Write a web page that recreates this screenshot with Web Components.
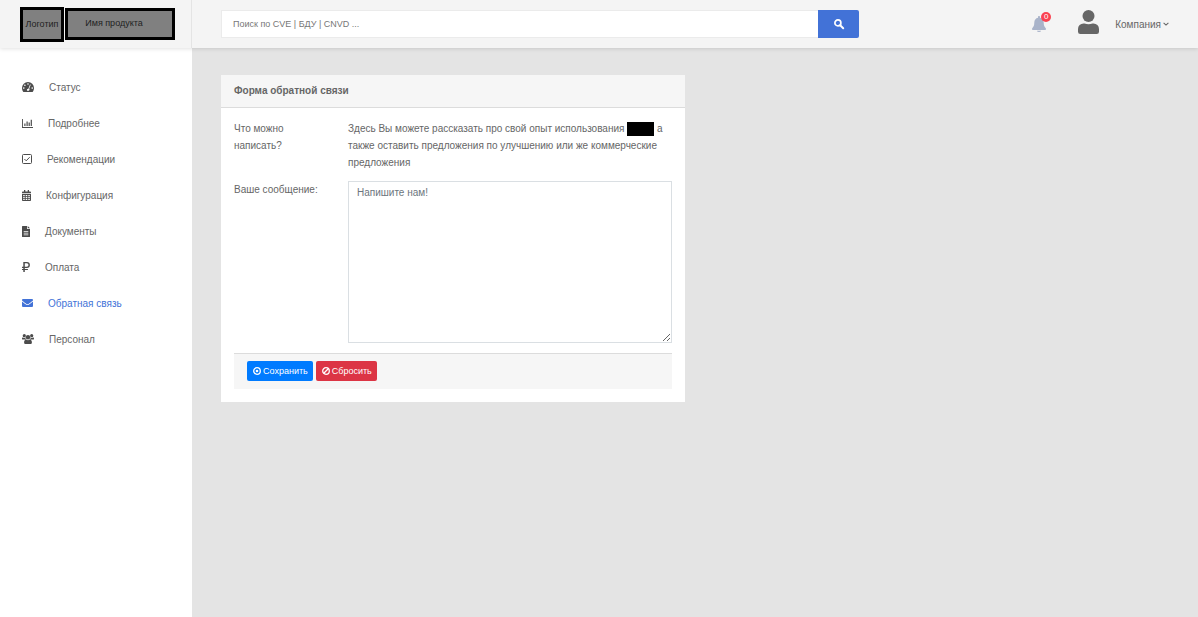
<!DOCTYPE html>
<html lang="ru">
<head>
<meta charset="utf-8">
<meta name="viewport" content="width=device-width, initial-scale=1">
<title>Форма обратной связи</title>
<style>
  html, body { margin: 0; height: 100%; }
  body {
    --blue: #4272d7;
    --text: #666;
    --line: #dcdcdc;
    --soft: #f6f6f6;
    background: #e4e4e4;
    color: var(--text);
    font: 10px/17px "Liberation Sans", Arial, sans-serif;
  }
</style>
</head>
<body>
<app-shell>
  <brand-logo slot="brand"><span>Логотип</span><span slot="name">Имя продукта</span></brand-logo>
  <search-box slot="tools"></search-box>
  <user-tools slot="tools" count="0">Компания</user-tools>
  <side-nav slot="nav">
    <nav-item icon="gauge">Статус</nav-item>
    <nav-item icon="chart">Подробнее</nav-item>
    <nav-item icon="check">Рекомендации</nav-item>
    <nav-item icon="calendar">Конфигурация</nav-item>
    <nav-item icon="file">Документы</nav-item>
    <nav-item icon="ruble">Оплата</nav-item>
    <nav-item icon="mail" active>Обратная связь</nav-item>
    <nav-item icon="users">Персонал</nav-item>
  </side-nav>
  <feedback-form></feedback-form>
</app-shell>

<script>
const ICONS = {
  gauge: [12, 10, '<path fill-rule="evenodd" d="M6 0a6 6 0 0 0-6 6c0 1.400.5 2.700 1.200 3.700.1.200.3.300.5.300h8.600c.2 0 .4-.1.500-.3.700-1 1.200-2.300 1.200-3.700a6 6 0 0 0-6-6zM6 1.200a.8.800 0 1 1 0 1.600.8.800 0 0 1 0-1.600zM2.900 2.400a.8.800 0 1 1 0 1.600.8.800 0 0 1 0-1.600zM1.800 5.300a.8.800 0 1 1 0 1.600.8.800 0 0 1 0-1.600zM10.200 5.300a.8.800 0 1 1 0 1.600.8.800 0 0 1 0-1.600zM8 2.500l.7.300-1.500 4a1.300 1.300 0 0 1-.3 1.900H5.100a1.300 1.300 0 0 1 1.300-2z"/>'],
  chart: [11, 9, '<path d="M0 0h.9v8H11v.9H0zM2.300 4.500h1.200V7H2.300zM4.500 2.500h1.200V7H4.500zM6.600 3.500h1.200V7H6.600zM8.700.8h1.200V7H8.700z"/>'],
  check: [10, 10, '<path fill="none" stroke="currentColor" d="M1.500.5h7a1 1 0 0 1 1 1v7a1 1 0 0 1-1 1h-7a1 1 0 0 1-1-1v-7a1 1 0 0 1 1-1z"/><path fill="none" stroke="currentColor" d="M2.400 5l1.800 1.800 3.500-3.600"/>'],
  calendar: [9, 11, '<path fill-rule="evenodd" d="M2 0h1.300v1.400h2.400V0H7v1.400h1.200c.5 0 .8.300.8.800v1.100H0V2.200c0-.5.300-.8.800-.8H2zM0 4h9v6.200c0 .5-.3.800-.8.800H.8c-.5 0-.8-.3-.8-.8zm1.200 1v1.300h1.500V5zm2.500 0v1.300h1.600V5zm2.600 0v1.300h1.500V5zM1.200 7v1.200h1.500V7zm2.500 0v1.200h1.600V7zm2.600 0v1.200h1.500V7zM1.200 9v1h1.500V9zm2.500 0v1h1.600V9zm2.600 0v1h1.500V9z"/>'],
  file: [8, 11, '<path fill-rule="evenodd" d="M.6 0H5v2.400c0 .4.200.6.600.6H8v7.400c0 .4-.2.600-.6.600H.6c-.4 0-.6-.2-.6-.6V.6C0 .2.200 0 .6 0zM1.700 5v.8h4.600V5zm0 1.700v.8h4.600v-.8zm0 1.700v.8h4.600v-.8zM5.700 0L8 2.300H5.700z"/>'],
  ruble: [8, 10, '<path fill-rule="evenodd" d="M1.300 0h3.600a2.900 2.900 0 0 1 0 6H2.800v.9h3.100v1.200H2.800V10H1.300V8.100H0V6.900h1.300V6H0V4.700h1.300zm1.500 1.300v3.400h2a1.700 1.700 0 0 0 0-3.400z"/>'],
  mail: [11, 8, '<path d="M1 0h9a1 1 0 0 1 1 1v.4C9.600 2.500 8.400 3.500 6.500 4.900c-.7.500-1.300.5-2 0C2.600 3.500 1.400 2.500 0 1.400V1a1 1 0 0 1 1-1zM0 2.500c1.300 1 2.300 1.800 4 3 1 .7 2 .7 3 0 1.700-1.200 2.700-2 4-3V7a1 1 0 0 1-1 1H1a1 1 0 0 1-1-1z"/>'],
  users: [12, 10, '<circle cx="2.300" cy="1.700" r="1.600"/><circle cx="9.700" cy="1.700" r="1.600"/><circle cx="6" cy="3.300" r="2.200"/><path d="M.9 3.600c.9.500 1.800.5 2.500 0 0 .9.200 1.500.6 2H1.300C.5 5.600 0 5.300 0 4.700c0-.6.300-1.200.9-1.100zM11.100 3.600c-.9.500-1.800.5-2.500 0 0 .9-.2 1.500-.6 2h2.700c.8 0 1.300-.3 1.300-.9s-.3-1.200-.9-1.100zM4.200 5.600c1.200.8 2.400.8 3.600 0C9.300 5.700 9.900 7 9.900 8.400c0 1-.7 1.600-1.600 1.600H3.700c-.9 0-1.600-.6-1.600-1.600 0-1.400.6-2.700 2.100-2.800z"/>'],
  search: [10, 10, '<circle cx="3.900" cy="3.900" r="3" fill="none" stroke="currentColor" stroke-width="1.700"/><path d="M6.200 6.200l3 3" stroke="currentColor" stroke-width="2" stroke-linecap="round"/>'],
  bell: [14, 16, '<path d="M7 0c.6 0 1 .4 1 1v.7c2.300.5 3.700 2.300 3.700 4.800 0 3.200.8 4.300 1.900 5.400.8.800.4 2.100-.8 2.100H1.200C0 14-.4 12.700.4 11.900c1.100-1.100 1.900-2.200 1.900-5.400C2.300 4 3.700 2.200 6 1.700V1c0-.6.400-1 1-1zM5 14.700h4a2 1.300 0 0 1-4 0z"/>'],
  user: [21, 24, '<circle cx="10.500" cy="6" r="6"/><path d="M5.500 13.500h1c2.600 1 5.400 1 8 0h1a5.500 5.500 0 0 1 5.500 5.500v2.700a2.300 2.300 0 0 1-2.300 2.300H2.300A2.300 2.300 0 0 1 0 21.700V19a5.500 5.500 0 0 1 5.500-5.500z"/>'],
  chevron: [6, 4, '<path d="M.6.800L3 3.100 5.400.8" fill="none" stroke="currentColor" stroke-width="1.100"/>'],
  target: [8, 8, '<circle cx="4" cy="4" r="3.300" fill="none" stroke="currentColor" stroke-width="1.300"/><circle cx="4" cy="4" r="1.300"/>'],
  ban: [8, 8, '<circle cx="4" cy="4" r="3.300" fill="none" stroke="currentColor" stroke-width="1.300"/><path d="M6.200 1.800L1.800 6.200" stroke="currentColor" stroke-width="1.300"/>']
};

/* Base class: fills an open shadow root from the subclass's render(). */
class Base extends HTMLElement {
  connectedCallback() {
    if (this.shadowRoot) return;
    const t = document.createElement('template');
    t.innerHTML = '<style>*{box-sizing:border-box}</style>' + this.render();
    this.attachShadow({ mode: 'open' }).append(t.content.cloneNode(true));
  }
}

class UiIcon extends Base {
  render() {
    const [w, h, body] = ICONS[this.getAttribute('name')];
    return `<style>:host{display:inline-flex;flex:none}svg{display:block;overflow:visible}</style>
      <svg width="${w}" height="${h}" viewBox="0 0 ${w} ${h}" fill="currentColor" aria-hidden="true">${body}</svg>`;
  }
}

class AppShell extends Base {
  render() {
    return `<style>
      :host{display:grid;grid-template:48px 1fr / 192px minmax(0,1fr);min-height:100vh}
      header{grid-column:1/-1;display:grid;grid-template-columns:subgrid;background:#f4f4f4;box-shadow:0 1px 4px rgba(0,0,0,.12);z-index:1}
      .brand{display:flex;align-items:center;padding-left:20px;border-right:1px solid #e4e4e4}
      .tools{display:flex;align-items:center;padding:0 29px}
      aside{background:#fff;padding-top:21px}
      main{display:grid;grid-template-columns:1fr 1fr;gap:20px;align-items:start;padding:27px 29px}
    </style>
    <header><div class="brand"><slot name="brand"></slot></div><div class="tools"><slot name="tools"></slot></div></header>
    <aside><slot name="nav"></slot></aside>
    <main><slot></slot></main>`;
  }
}

class BrandLogo extends Base {
  render() {
    return `<style>
      :host{display:flex;align-items:center;gap:1px;color:#222;font-size:9px;line-height:12px}
      div{display:flex;align-items:center;justify-content:center;background:#808080;border:3px solid #000}
      .mark{width:44px;height:35px}
      .name{width:110px;height:32px;padding:0 12px 2px 0}
    </style><div class="mark"><slot></slot></div><div class="name"><slot name="name"></slot></div>`;
  }
}

class SearchBox extends Base {
  render() {
    return `<style>
      :host{display:block;flex:1}
      form{display:flex;height:28px}
      input{flex:1;min-width:0;margin:0;padding:0 11px;border:1px solid #ebebeb;border-right:0;background:#fff;color:var(--text);font:9px/12px "Liberation Sans",Arial,sans-serif;outline:0}
      input::placeholder{color:#777;opacity:1}
      button{display:flex;align-items:center;justify-content:center;width:41px;padding:0;border:0;border-radius:0 2px 2px 0;background:var(--blue);color:#fff}
    </style>
    <form role="search"><input type="search" aria-label="Поиск" placeholder="Поиск по CVE | БДУ | CNVD ..."><button type="button" aria-label="Найти"><ui-icon name="search"></ui-icon></button></form>`;
  }
}

class UserTools extends Base {
  render() {
    return `<style>
      :host{display:flex;align-items:center;margin-left:173px}
      button{display:flex;align-items:center;padding:0;border:0;background:none;color:var(--text);font:inherit}
      .bell{position:relative;color:#a9b3c9}
      .badge{position:absolute;left:9px;top:-4px;width:10px;height:10px;border-radius:50%;background:#fa4251;color:#fff;font-size:8px;line-height:10px;text-align:center}
      .user{margin-left:32px}
      .user ui-icon:first-child{margin-right:16px;margin-bottom:4px}
      .user ui-icon:last-child{margin-left:2px}
    </style>
    <button class="bell" type="button" aria-label="Уведомления"><ui-icon name="bell"></ui-icon><span class="badge">${this.getAttribute('count')}</span></button>
    <button class="user" type="button"><ui-icon name="user"></ui-icon><slot></slot><ui-icon name="chevron"></ui-icon></button>`;
  }
}

class SideNav extends Base {
  render() {
    return `<style>:host{display:block}nav{display:flex;flex-direction:column}</style><nav><slot></slot></nav>`;
  }
}

class NavItem extends Base {
  render() {
    return `<style>
      :host{display:block}
      a{display:flex;align-items:center;gap:15px;height:36px;padding:0 22px;color:var(--text);text-decoration:none}
      ui-icon{color:#4c4c4c}
      :host([active]) a,:host([active]) ui-icon{color:var(--blue)}
    </style><a href="#"><ui-icon name="${this.getAttribute('icon')}"></ui-icon><slot></slot></a>`;
  }
}

class PanelCard extends Base {
  render() {
    return `<style>
      :host{display:block;background:#fff}
      header{padding:7px 13px 8px;background:var(--soft);border-bottom:1px solid var(--line);font-weight:bold}
      .body{padding:12px 13px 13px}
    </style><header><slot name="title"></slot></header><div class="body"><slot></slot></div>`;
  }
}

class ActionButton extends Base {
  render() {
    return `<style>
      :host{display:block}
      button{display:flex;align-items:center;gap:2px;height:20px;padding:0 5px 0 6px;border:0;border-radius:2px;background:#007bff;color:#fff;font:9px/12px "Liberation Sans",Arial,sans-serif}
      :host([danger]) button{background:#dc3545}
    </style><button type="button"><ui-icon name="${this.getAttribute('icon')}"></ui-icon><slot></slot></button>`;
  }
}

class FeedbackForm extends Base {
  render() {
    return `<style>
      :host{display:block}
      .row{display:grid;grid-template-columns:1fr 3fr;column-gap:6px;margin-bottom:10px}
      .caption{padding-right:16px}
      label{white-space:nowrap}
      p{margin:0}
      .redacted{display:inline-block;width:27px;height:14px;background:#000;vertical-align:middle}
      textarea{display:block;width:100%;height:162px;margin:0;padding:2px 8px;border:1px solid #dadfe3;background:#fff;color:var(--text);font:inherit;resize:vertical;outline:0}
      textarea::placeholder{color:#6c757d;opacity:1}
      footer{display:flex;gap:3px;padding:7px 13px 8px;background:var(--soft);border-top:1px solid var(--line)}
    </style>
    <panel-card>
      <span slot="title">Форма обратной связи</span>
      <div class="row"><div class="caption">Что можно написать?</div>
        <p>Здесь Вы можете рассказать про свой опыт использования <span class="redacted"></span> а также оставить предложения по улучшению или же коммерческие предложения</p></div>
      <div class="row"><label for="message">Ваше сообщение:</label><textarea id="message" placeholder="Напишите нам!"></textarea></div>
      <footer><action-button icon="target">Сохранить</action-button><action-button icon="ban" danger>Сбросить</action-button></footer>
    </panel-card>`;
  }
}

customElements.define('ui-icon', UiIcon);
customElements.define('app-shell', AppShell);
customElements.define('brand-logo', BrandLogo);
customElements.define('search-box', SearchBox);
customElements.define('user-tools', UserTools);
customElements.define('side-nav', SideNav);
customElements.define('nav-item', NavItem);
customElements.define('panel-card', PanelCard);
customElements.define('action-button', ActionButton);
customElements.define('feedback-form', FeedbackForm);
</script>
</body>
</html>
